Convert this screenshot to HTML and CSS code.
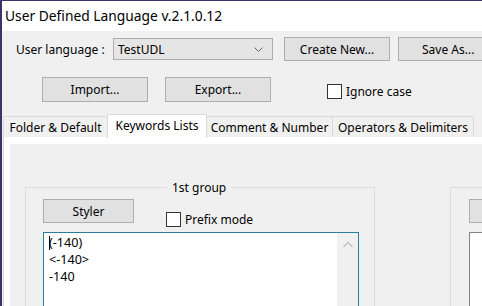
FILE: index.html
```html
<!DOCTYPE html>
<html>
<head>
<meta charset="utf-8">
<link rel="stylesheet" href="styles.css">
</head>
<body>
<div class="window">
  <div class="titlebar">User Defined Language v.2.1.0.12</div>
  <div class="dialog">
    <div class="row1">
      <span class="label">User language :</span>
      <div class="combo"><span>TestUDL</span>
        <svg class="chev" width="9" height="5" viewBox="0 0 9 5"><path d="M0.5 0.5 L4.5 4.5 L8.5 0.5" fill="none" stroke="#606060" stroke-width="1"/></svg>
      </div>
      <div class="btn btn-create">Create New...</div>
      <div class="btn btn-save">Save As...</div>
    </div>
    <div class="row2">
      <div class="btn btn-import">Import...</div>
      <div class="btn btn-export">Export...</div>
      <label class="check check-ignore"><span class="box"></span><span>Ignore case</span></label>
    </div>
    <div class="tabs">
      <div class="tab t1">Folder &amp; Default</div>
      <div class="tab sel">Keywords Lists</div>
      <div class="tab t3">Comment &amp; Number</div>
      <div class="tab t4">Operators &amp; Delimiters</div>
    </div>
    <div class="page">
      <div class="panel">
        <div class="groups">
          <div class="group g1">
            <div class="legend">1st group</div>
            <div class="grow">
              <div class="btn btn-styler">Styler</div>
              <label class="check check-prefix"><span class="box"></span><span>Prefix mode</span></label>
            </div>
            <div class="editor focus">
              <div class="lines">
                <div class="line"><span class="caret"></span>(-140)</div>
                <div class="line">&lt;-140&gt;</div>
                <div class="line">-140</div>
              </div>
              <div class="sbar">
                <svg width="12" height="7" viewBox="0 0 12 7"><path d="M1.5 6 L6 1.5 L10.5 6" fill="none" stroke="#c2c2c2" stroke-width="1.4"/></svg>
              </div>
            </div>
          </div>
          <div class="group g2">
            <div class="grow">
              <div class="btn btn-styler2"></div>
            </div>
            <div class="editor plain"></div>
          </div>
        </div>
      </div>
    </div>
  </div>
</div>
</body>
</html>
```
FILE: styles.css
```css
html, body {
  margin: 0;
  padding: 0;
  background: #f0f0f0;
  overflow: hidden;
}
body {
  width: 482px;
  height: 306px;
  font-family: "Noto Sans", "Open Sans", sans-serif;
  font-size: 12px;
  color: #000;
}
.window {
  height: 305px;
  border-left: 2px solid #3c3468;
  border-top: 1px solid #3c3468;
  background: #f0f0f0;
  overflow: hidden;
}
.titlebar {
  height: 30px;
  background: #fff;
  font-size: 13.8px;
  line-height: 30px;
  padding-left: 3px;
  white-space: nowrap;
  color: #000;
}
.dialog {
  background: #f0f0f0;
  height: 275px;
  width: 520px;
}
.row1 {
  display: flex;
  align-items: center;
  padding-top: 6px;
  height: 24px;
}
.label {
  margin-left: 14px;
  width: 97px;
  white-space: nowrap;
}
.combo {
  height: 22px;
  border: 1px solid #adadad;
  background: #e5e5e5;
  display: flex;
  align-items: center;
  justify-content: space-between;
  padding: 0 9px 0 4px;
  box-sizing: border-box;
  width: 160px;
}
.btn {
  height: 24px;
  box-sizing: border-box;
  border: 1px solid #adadad;
  background: #e1e1e1;
  display: flex;
  align-items: center;
  justify-content: center;
  white-space: nowrap;
  flex-shrink: 0;
}
.btn-create { width: 106px; margin-left: 11px; }
.btn-save { width: 100px; margin-left: 8px; justify-content: flex-start; padding-left: 23px; }
.row2 {
  display: flex;
  align-items: center;
  margin-top: 16px;
  height: 25px;
}
.btn-import { width: 106px; height: 25px; margin-left: 40px; }
.btn-export { width: 106px; height: 25px; margin-left: 17px; }
.check {
  display: flex;
  align-items: center;
  white-space: nowrap;
}
.box {
  width: 13px;
  height: 13px;
  border: 1px solid #333;
  background: #fff;
  margin-right: 4px;
  display: inline-block;
}
.check-ignore { margin-left: 56px; margin-top: 4px; }
.tabs {
  display: flex;
  align-items: flex-end;
  margin-top: 11px;
  padding-left: 1px;
  height: 24px;
}
.tab {
  height: 21px;
  box-sizing: border-box;
  border: 1px solid #d9d9d9;
  border-bottom: none;
  background: #f0f0f0;
  display: flex;
  align-items: center;
  justify-content: center;
  white-space: nowrap;
  flex-shrink: 0;
}
.t1 { width: 104px; border-right: none; }
.t3 { width: 126px; border-left: none; }
.t4 { width: 141px; border-left: none; }
.tab.sel {
  width: 100px;
  height: 24px;
  background: #fff;
  position: relative;
  top: 1px;
  align-items: flex-start;
  padding-top: 2px;
}
.page {
  background: #fff;
  border-left: 1px solid #d9d9d9;
  margin-left: 1px;
  padding: 7px 0 0 6px;
  height: 200px;
}
.panel {
  background: #f0f0f0;
  height: 200px;
  padding-top: 43px;
  box-sizing: border-box;
}
.groups {
  display: flex;
}
.group {
  border: 1px solid #dcdcdc;
  height: 160px;
  box-sizing: border-box;
  flex-shrink: 0;
}
.g1 {
  width: 350px;
  margin-left: 15px;
  position: relative;
  padding: 11px 0 0 17px;
}
.g2 {
  width: 120px;
  margin-left: 75px;
  padding: 11px 0 0 18px;
}
.legend {
  position: absolute;
  top: -8px;
  left: 141px;
  background: #f0f0f0;
  padding: 0 5px;
  line-height: 16px;
}
.grow {
  display: flex;
  align-items: flex-start;
  height: 33px;
}
.btn-styler { width: 91px; height: 24px; }
.btn-styler2 { width: 40px; height: 24px; }
.check-prefix { margin-left: 32px; margin-top: 12px; }
.editor {
  background: #fff;
  box-sizing: border-box;
  height: 90px;
}
.focus {
  width: 316px;
  border: 1px solid #2a7ea0;
  display: flex;
  justify-content: space-between;
}
.plain {
  width: 60px;
  border: 1px solid #828282;
}
.lines {
  padding: 1px 0 0 5px;
  line-height: 17px;
  font-size: 12.6px;
}
.line { position: relative; }
.caret {
  position: absolute;
  left: 0;
  top: 2px;
  width: 1px;
  height: 14px;
  background: #000;
}
.sbar {
  width: 21px;
  background: #f0f0f0;
  display: flex;
  justify-content: center;
  padding-top: 8px;
  box-sizing: border-box;
}
.sbar svg { display: block; }
```
